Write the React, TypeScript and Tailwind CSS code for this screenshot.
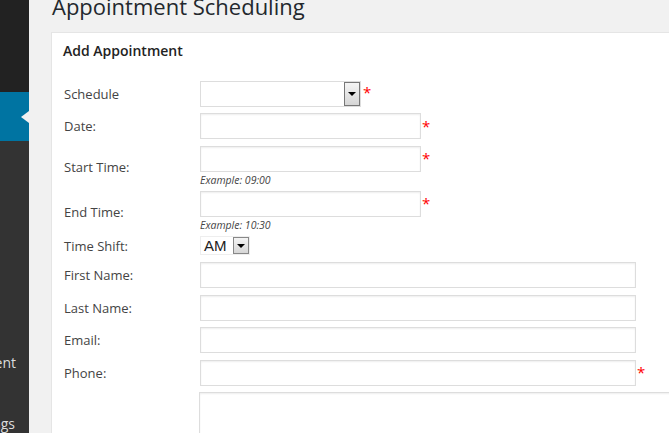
import type { ReactNode } from 'react';

const inputCls =
  'box-border block h-[26px] border border-[#ddd] bg-white shadow-[inset_0_1px_2px_rgba(0,0,0,0.07)] outline-none';

function Req({ className = '' }: { className?: string }) {
  return (
    <span className={`ml-[1px] text-[15px] leading-none text-[#f00] ${className}`}>*</span>
  );
}

function Row({ label, children, className = '' }: { label: string; children: ReactNode; className?: string }) {
  return (
    <div className={`flex items-center ${className}`}>
      <div className="w-[136px] shrink-0 text-[13px] leading-[18px] text-[#444]">{label}</div>
      <div className="flex items-start">{children}</div>
    </div>
  );
}

function Arrow() {
  return <span className="block h-0 w-0 border-x-[4px] border-t-[4px] border-x-transparent border-t-black" />;
}

export default function App() {
  return (
    <div className="flex h-[433px] w-[669px] overflow-hidden bg-[#f1f1f1] font-['Open_Sans','Liberation_Sans',sans-serif]">
      {/* Left - admin menu (clipped) */}
      <div className="flex w-[29px] shrink-0 flex-col overflow-hidden">
        <div className="h-[93px] bg-[#222]" />
        <div className="relative h-[50px] bg-[#0074a2]">
          <span className="absolute right-0 top-[19px] h-0 w-0 border-y-[6px] border-r-[8px] border-y-transparent border-r-[#f1f1f1]" />
        </div>
        <div className="flex-1 bg-[#333] pt-[213px] text-[14px] leading-[18px] text-[#ddd]">
          <div className="flex justify-end whitespace-nowrap pr-[13px]">Appointment</div>
          <div className="mt-[43px] flex justify-end whitespace-nowrap pr-[14px]">Settings</div>
        </div>
      </div>

      {/* Main */}
      <div className="min-w-0 flex-1 pl-[22px]">
        <h1 className="-mt-[8px] h-[29px] whitespace-nowrap pl-px text-[22px] leading-[29px] font-normal text-[#23282d]">
          Appointment Scheduling
        </h1>

        <div className="mt-[11px] w-[700px] border border-[#e5e5e5] bg-white">
          <h3 className="pl-[11px] pr-[10px] py-[8px] text-[14px] leading-[20px] font-semibold text-[#222]">Add Appointment</h3>

          <div className="pl-[12px]">
            <Row label="Schedule" className="mt-[12px]">
              <div className="flex h-[26px] w-[161px] border border-[#ddd] bg-white">
                <div className="flex-1" />
                <div className="flex w-[16px] items-center justify-center border border-[#777] bg-gradient-to-b from-[#f4f4f4] to-[#d6d6d6]">
                  <Arrow />
                </div>
              </div>
              <Req className="ml-[2px] mt-[4px]" />
            </Row>

            <Row label="Date:" className="mt-[6px]">
              <input readOnly className={`${inputCls} w-[221px]`} />
              <Req className="mt-[6px]" />
            </Row>

            <Row label="Start Time:" className="mt-[7px]">
              <div>
                <input readOnly className={`${inputCls} w-[221px]`} />
                <div className="text-[10.5px] italic leading-[16px] text-[#444]">Example: 09:00</div>
              </div>
              <Req className="mt-[5px]" />
            </Row>

            <Row label="End Time:" className="mt-[3px]">
              <div>
                <input readOnly className={`${inputCls} w-[221px]`} />
                <div className="text-[10.5px] italic leading-[16px] text-[#444]">Example: 10:30</div>
              </div>
              <Req className="mt-[5px]" />
            </Row>

            <Row label="Time Shift:" className="mt-[3px]">
              <div className="flex h-[19px] w-[50px] items-center border border-[#eee] bg-white">
                <span className="flex-1 pl-[3px] font-['Liberation_Sans',sans-serif] text-[15px] leading-none text-[#222]">AM</span>
                <div className="flex h-[17px] w-[16px] items-center justify-center border border-[#888] bg-gradient-to-b from-[#f4f4f4] to-[#d6d6d6]">
                  <Arrow />
                </div>
              </div>
            </Row>

            <Row label="First Name:" className="mt-[7px]">
              <input readOnly className={`${inputCls} w-[436px]`} />
            </Row>

            <Row label="Last Name:" className="mt-[7px]">
              <input readOnly className={`${inputCls} w-[436px]`} />
            </Row>

            <Row label="Email:" className="mt-[6px]">
              <input readOnly className={`${inputCls} w-[436px]`} />
            </Row>

            <Row label="Phone:" className="mt-[7px]">
              <input readOnly className={`${inputCls} w-[436px]`} />
              <Req className="mt-[5px]" />
            </Row>

            <div className="mt-[6px] flex">
              <div className="w-[135px] shrink-0" />
              <textarea readOnly className="box-border h-[90px] w-[500px] resize-none border border-[#ddd] bg-white shadow-[inset_0_1px_2px_rgba(0,0,0,0.07)] outline-none" />
            </div>
          </div>
        </div>
      </div>
    </div>
  );
}
